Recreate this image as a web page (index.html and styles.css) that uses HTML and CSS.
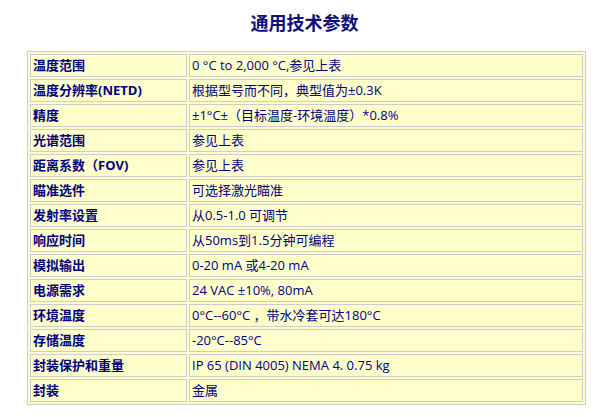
FILE: index.html
```html
<!DOCTYPE html>
<html lang="zh-CN">
<head>
<meta charset="utf-8">
<title>通用技术参数</title>
<link rel="stylesheet" href="styles.css">
</head>
<body>
<h2 class="title">通用技术参数</h2>
<table class="spec">
<tbody>
<tr><th>温度范围</th><td>0 °C to 2,000 °C,参见上表</td></tr>
<tr><th>温度分辨率(NETD)</th><td>根据型号而不同，典型值为±0.3K</td></tr>
<tr><th>精度</th><td>±1°C±（目标温度-环境温度）*0.8%</td></tr>
<tr><th>光谱范围</th><td>参见上表</td></tr>
<tr><th>距离系数（FOV)</th><td>参见上表</td></tr>
<tr><th>瞄准选件</th><td>可选择激光瞄准</td></tr>
<tr><th>发射率设置</th><td>从0.5-1.0 可调节</td></tr>
<tr><th>响应时间</th><td>从50ms到1.5分钟可编程</td></tr>
<tr><th>模拟输出</th><td>0-20 mA 或4-20 mA</td></tr>
<tr><th>电源需求</th><td>24 VAC ±10%, 80mA</td></tr>
<tr><th>环境温度</th><td>0°C--60°C ，带水冷套可达180°C</td></tr>
<tr><th>存储温度</th><td>-20°C--85°C</td></tr>
<tr><th>封装保护和重量</th><td>IP 65 (DIN 4005) NEMA 4. 0.75 kg</td></tr>
<tr><th>封装</th><td>金属</td></tr>
</tbody>
</table>
</body>
</html>
```
FILE: styles.css
```css
html, body {
  margin: 0;
  padding: 0;
  background: #ffffff;
}
body {
  font-family: "Open Sans", "Noto Sans CJK SC", sans-serif;
  color: #000080;
  font-size: 13px;
}
.title {
  margin: 0;
  height: 51px;
  padding-top: 10px;
  box-sizing: border-box;
  text-align: center;
  font-size: 18px;
  line-height: 24px;
  font-weight: bold;
  color: #10107a;
  font-family: "Noto Sans CJK SC", sans-serif;
}
.spec {
  margin-left: 27px;
  width: 559px;
  border: 1px solid #cccccc;
  border-collapse: separate;
  border-spacing: 2px;
  background: #ffffcc;
  table-layout: fixed;
}
.spec th,
.spec td {
  border: 1px solid #cccccc;
  height: 23px;
  box-sizing: border-box;
  padding: 0 2px;
  text-align: left;
  vertical-align: middle;
  line-height: 19px;
  white-space: nowrap;
}
.spec th {
  width: 157px;
  font-weight: bold;
}
.spec td {
  font-weight: normal;
}
```
